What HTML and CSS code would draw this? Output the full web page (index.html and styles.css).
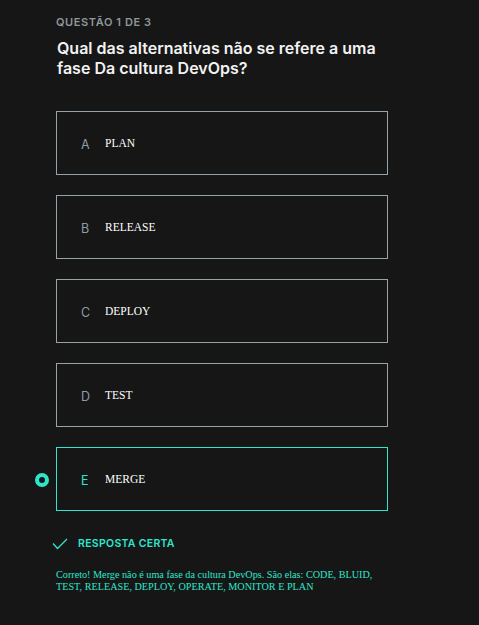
FILE: index.html
```html
<!DOCTYPE html>
<html lang="pt">
<head>
<meta charset="utf-8">
<link rel="stylesheet" href="styles.css">
</head>
<body>
<main class="quiz">
  <p class="counter">QUESTÃO 1 DE 3</p>
  <h1 class="question">Qual das alternativas não se refere a uma fase Da cultura DevOps?</h1>
  <ul class="options">
    <li class="option"><span class="letter">A</span><span class="text">PLAN</span></li>
    <li class="option"><span class="letter">B</span><span class="text">RELEASE</span></li>
    <li class="option"><span class="letter">C</span><span class="text">DEPLOY</span></li>
    <li class="option"><span class="letter">D</span><span class="text">TEST</span></li>
    <li class="option selected"><span class="radio"></span><span class="letter">E</span><span class="text">MERGE</span></li>
  </ul>
  <div class="result">
    <svg class="check" width="16" height="12" viewBox="0 0 16 12"><path d="M1 5.5 L5.5 10.5 L15 1" fill="none" stroke="#2ee6cc" stroke-width="1.3"/></svg>
    <span class="result-label">RESPOSTA CERTA</span>
  </div>
  <p class="explain">Correto! Merge não é uma fase da cultura DevOps. São elas: CODE, BLUID, TEST, RELEASE, DEPLOY, OPERATE, MONITOR E PLAN</p>
</main>
</body>
</html>
```
FILE: styles.css
```css
html, body {
  margin: 0;
  padding: 0;
  background: #161616;
}
.quiz {
  padding: 15px 0 0 56px;
  width: 332px;
}
.counter {
  margin: 0;
  font-family: "Inter", sans-serif;
  font-weight: 600;
  font-size: 11px;
  line-height: 14px;
  letter-spacing: 0.6px;
  color: #8e979c;
}
.question {
  margin: 9px 0 0 1px;
  font-family: "Inter", sans-serif;
  font-weight: 600;
  font-size: 16px;
  line-height: 20px;
  color: #f2f2f2;
}
.options {
  list-style: none;
  margin: 33px 0 0 0;
  padding: 0;
  display: flex;
  flex-direction: column;
  gap: 20px;
}
.option {
  position: relative;
  height: 62px;
  border: 1px solid #97a3aa;
  display: flex;
  align-items: center;
  padding-left: 24px;
}
.option.selected {
  border-color: #2ee6cc;
}
.letter {
  font-family: "Inter", sans-serif;
  font-size: 12.5px;
  color: #8f9ca3;
  width: 24px;
  margin-top: 2px;
}
.selected .letter {
  color: #2ee6cc;
}
.text {
  font-family: "Liberation Serif", serif;
  font-size: 11.5px;
  color: #ffffff;
}
.radio {
  position: absolute;
  left: -22px;
  top: 25px;
  width: 6px;
  height: 6px;
  border: 4px solid #2ee6cc;
  border-radius: 50%;
  background: #161616;
}
.result {
  display: flex;
  align-items: center;
  margin-top: 26px;
}
.check {
  margin-left: -4px;
  margin-right: 10px;
}
.result-label {
  font-family: "Inter", sans-serif;
  font-weight: 600;
  font-size: 10.5px;
  letter-spacing: 0.3px;
  color: #2ee6cc;
}
.explain {
  margin: 19px 0 0 0;
  font-family: "Liberation Serif", serif;
  font-size: 10.2px;
  line-height: 12px;
  color: #2ee6cc;
}
```
